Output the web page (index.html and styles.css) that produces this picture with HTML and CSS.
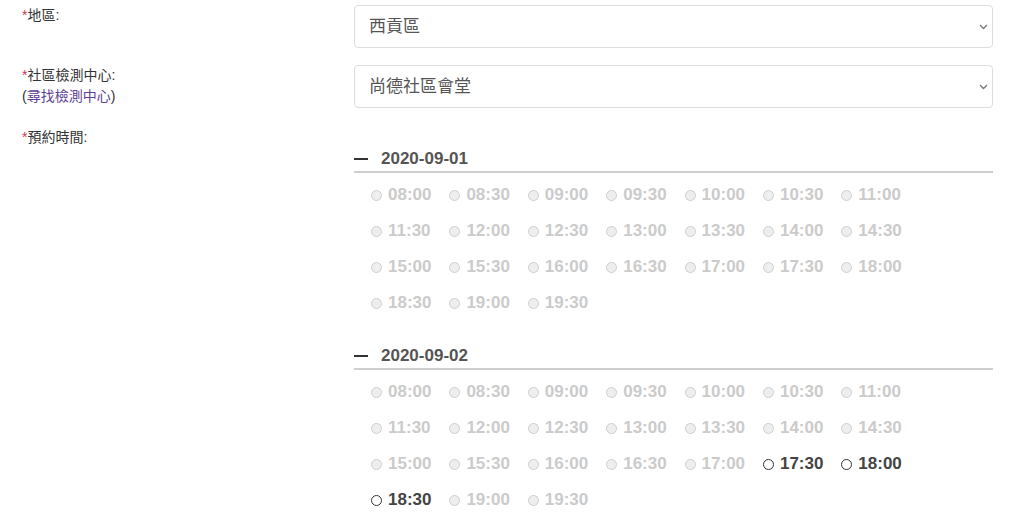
FILE: index.html
```html
<!DOCTYPE html>
<html lang="zh-Hant">
<head>
    <meta charset="UTF-8">
    <title>預約檢測</title>
    <link rel="stylesheet" href="styles.css">
</head>
<body>
    <form class="booking">
        <div class="row">
            <div class="label"><span class="req">*</span>地區:</div>
            <div class="field">
                <div class="select">西貢區
                    <svg class="chevron" width="9" height="6" viewBox="0 0 9 6"><path d="M1 1l3.5 3.5L8 1" fill="none" stroke="#777" stroke-width="1.3"/></svg>
                </div>
            </div>
        </div>

        <div class="row">
            <div class="label"><span class="req">*</span>社區檢測中心:<br>(<a href="#">尋找檢測中心</a>)</div>
            <div class="field">
                <div class="select">尚德社區會堂
                    <svg class="chevron" width="9" height="6" viewBox="0 0 9 6"><path d="M1 1l3.5 3.5L8 1" fill="none" stroke="#777" stroke-width="1.3"/></svg>
                </div>
            </div>
        </div>

        <div class="row">
            <div class="label time-label"><span class="req">*</span>預約時間:</div>
            <div class="field schedule" id="schedule"></div>
        </div>
    </form>

    <script>
        const days = [
            { date: '2020-09-01', open: [] },
            { date: '2020-09-02', open: ['17:30', '18:00', '18:30'] }
        ];

        const times = [];
        for (let h = 8; h < 20; h++) {
            const hh = String(h).padStart(2, '0');
            times.push(hh + ':00', hh + ':30');
        }

        const schedule = document.getElementById('schedule');
        days.forEach(day => {
            const block = document.createElement('div');
            block.className = 'day';
            let html = `<div class="day-head"><span class="dash"></span>${day.date}</div><div class="slots">`;
            times.forEach(t => {
                const cls = day.open.includes(t) ? 'slot' : 'slot disabled';
                html += `<label class="${cls}"><span class="radio"></span>${t}</label>`;
            });
            block.innerHTML = html + '</div>';
            schedule.appendChild(block);
        });
    </script>
</body>
</html>
```

FILE: styles.css
```css
* {
    margin: 0;
    padding: 0;
    box-sizing: border-box;
}

body {
    background: #fff;
    font-family: 'Liberation Sans', 'Noto Sans CJK TC', sans-serif;
    color: #333;
    overflow: hidden;
}

.booking {
    padding-top: 5px;
    width: 993px;
}

.row {
    display: grid;
    grid-template-columns: 354px 1fr;
    margin-bottom: 17px;
}

.label {
    padding-left: 22px;
    font-size: 14px;
    line-height: 21px;
    color: #333;
}

.label a {
    color: #5e3f92;
    text-decoration: none;
}

.req {
    color: #d2335c;
}

.time-label {
    padding-top: 2px;
}

.select {
    position: relative;
    height: 43px;
    border: 1px solid #ddd;
    border-radius: 4px;
    padding-left: 14px;
    font-size: 17px;
    line-height: 41px;
    color: #555;
}

.chevron {
    position: absolute;
    right: 4px;
    top: 18px;
}

.schedule {
    padding-top: 23px;
}

.day {
    margin-bottom: 24px;
}

.day-head {
    display: flex;
    align-items: center;
    height: 21px;
    border-bottom: 2px solid #cfcfcf;
    box-sizing: content-box;
    padding-bottom: 2px;
    font-size: 17px;
    font-weight: bold;
    color: #555;
}

.dash {
    width: 14px;
    height: 2px;
    background: #333;
    margin-right: 13px;
}

.slots {
    display: grid;
    grid-template-columns: repeat(7, 78.4px);
    padding-left: 17px;
    margin-top: 4px;
}

.slot {
    display: flex;
    align-items: center;
    height: 36px;
    font-size: 17px;
    font-weight: bold;
    color: #444;
}

.radio {
    width: 11px;
    height: 11px;
    border: 1px solid #333;
    border-radius: 50%;
    background: #fff;
    margin-right: 6px;
}

.slot.disabled {
    color: #cbcbcb;
}

.slot.disabled .radio {
    border-color: #cfcfcf;
    background: #eee;
}
```
